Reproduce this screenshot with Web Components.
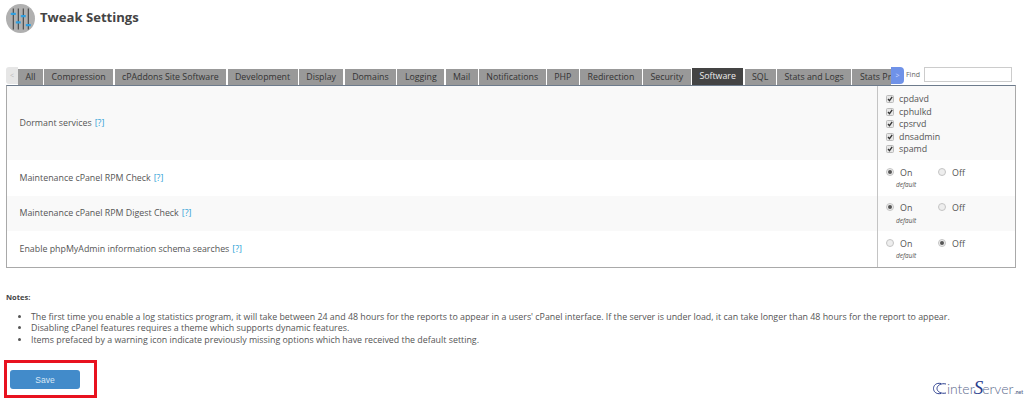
<!DOCTYPE html>
<html>
<head>
<meta charset="utf-8">
<title>Tweak Settings</title>
<style>
html, body { margin: 0; padding: 0; background: #fff; }
body { font-family: "Open Sans", sans-serif; color: #555; width: 1024px; height: 400px; overflow: hidden; }
</style>
</head>
<body>
<tweak-header>Tweak Settings</tweak-header>
<tweak-tabs active="Software"></tweak-tabs>
<tweak-table>
  <tweak-row label="Dormant services" tall>
    <tweak-check>cpdavd</tweak-check>
    <tweak-check>cphulkd</tweak-check>
    <tweak-check>cpsrvd</tweak-check>
    <tweak-check>dnsadmin</tweak-check>
    <tweak-check>spamd</tweak-check>
  </tweak-row>
  <tweak-row label="Maintenance cPanel RPM Check"><tweak-onoff value="on"></tweak-onoff></tweak-row>
  <tweak-row label="Maintenance cPanel RPM Digest Check" shaded><tweak-onoff value="on"></tweak-onoff></tweak-row>
  <tweak-row label="Enable phpMyAdmin information schema searches"><tweak-onoff value="off"></tweak-onoff></tweak-row>
</tweak-table>
<tweak-notes>
  <li>The first time you enable a log statistics program, it will take between 24 and 48 hours for the reports to appear in a users' cPanel interface. If the server is under load, it can take longer than 48 hours for the report to appear.</li>
  <li>Disabling cPanel features requires a theme which supports dynamic features.</li>
  <li>Items prefaced by a warning icon indicate previously missing options which have received the default setting.</li>
</tweak-notes>
<tweak-footer></tweak-footer>

<script>
class TweakHeader extends HTMLElement {
    constructor () {
        super();
        this.attachShadow({mode: 'open'}).innerHTML = `
        <style>
            :host { display: flex; align-items: center; gap: 5px; height: 36px; padding-left: 6px; }
            svg { width: 29px; height: 29px; display: block; }
            h1 { margin: 0; font-size: 13.1px; font-weight: 700; color: #444; position: relative; top: -1px; }
        </style>
        <svg viewBox="0 0 29 29">
            <circle cx="14.500" cy="14.500" r="14.500" fill="#b0b0b0"/>
            <path d="M7.300 4.500v21M12.300 4.500v21M17.300 4.500v21M22.300 4.500v21" stroke="#444" stroke-width="1.100"/>
            <g fill="#2f9fe0">
                <rect x="4.800" y="8.700" width="5" height="2.200" rx=".5"/>
                <rect x="9.800" y="17.300" width="5" height="2.200" rx=".5"/>
                <rect x="14.800" y="11" width="5" height="2.200" rx=".5"/>
                <rect x="19.800" y="20" width="5" height="2.200" rx=".5"/>
            </g>
        </svg>
        <h1><slot></slot></h1>`;
    }
}

class TweakTabs extends HTMLElement {
    constructor () {
        super();
        const names = ['All', 'Compression', 'cPAddons Site Software', 'Development', 'Display', 'Domains',
            'Logging', 'Mail', 'Notifications', 'PHP', 'Redirection', 'Security', 'Software', 'SQL',
            'Stats and Logs', 'Stats Pr'];
        const active = this.getAttribute('active');
        const tabs = names.map(n => `<a class="${n === active ? 'on' : ''}">${n}</a>`).join('');
        this.attachShadow({mode: 'open'}).innerHTML = `
        <style>
            :host { display: flex; align-items: flex-end; height: 18px; margin: 31px 0 0 6px; width: 1006px; font-size: 8.8px; }
            .prev, .next { width: 12px; height: 17px; flex: none; font-size: 7px; line-height: 17px; text-align: center; margin-bottom: 1px; }
            .prev { background: #e6e6e6; color: #bbb; border-radius: 3px 0 0 3px; }
            .next { background: #6f92e8; color: #cfdcff; border-radius: 0 4px 4px 0; width: 13px; }
            .strip { display: flex; gap: 1.4px; width: 873px; overflow: hidden; height: 17px; align-items: flex-end; flex: none; }
            a { flex: none; background: #999; color: #333; padding: 0 7.4px; line-height: 16px; white-space: nowrap; }
            a:last-child { padding-right: 0; flex: 1; }
            a.on { background: #444; color: #eee; line-height: 17px; }
            label { font-size: 7px; color: #666; margin: 0 4px 3px 2px; line-height: 15px; }
            input { width: 88px; height: 15px; box-sizing: border-box; border: 1px solid #ccc; padding: 0; margin: 0 0 3px; background: #fff; }
        </style>
        <div class="prev">&lt;</div>
        <div class="strip">${tabs}</div>
        <div class="next">&gt;</div>
        <label>Find</label>
        <input type="text">`;
    }
}

class TweakTable extends HTMLElement {
    constructor () {
        super();
        this.attachShadow({mode: 'open'}).innerHTML = `
        <style>
            :host { display: block; margin-left: 6px; width: 1010px; box-sizing: border-box; border: 1px solid #a9a9a9; border-top-color: #6d7b8c; }
        </style>
        <slot></slot>`;
    }
}

class TweakRow extends HTMLElement {
    constructor () {
        super();
        const tall = this.hasAttribute('tall');
        const shaded = tall || this.hasAttribute('shaded');
        this.attachShadow({mode: 'open'}).innerHTML = `
        <style>
            :host { display: grid; grid-template-columns: 870px 1fr; height: ${tall ? 74 : 35.5}px; background: ${shaded ? '#f9f9f9' : '#fff'}; font-size: 8.85px; }
            .label { display: flex; align-items: center; padding-left: 12.5px; color: #555; }
            .label a { color: #2a9fd6; margin-left: 3px; }
            .value { border-left: 1px solid #c4c4c4; padding: ${tall ? '7px' : '6px'} 0 0 8px; }
        </style>
        <div class="label"><span>${this.getAttribute('label')}</span><a>[?]</a></div>
        <div class="value"><slot></slot></div>`;
    }
}

const box = `<svg viewBox="0 0 8 8" width="8" height="8">
    <rect x=".5" y=".5" width="7" height="7" rx="1" fill="#e8e8e8" stroke="#bbb"/>
    <path d="M2 4l1.500 1.700L6.200 1.800" fill="none" stroke="#333" stroke-width="1.300"/>
</svg>`;

class TweakCheck extends HTMLElement {
    constructor () {
        super();
        this.attachShadow({mode: 'open'}).innerHTML = `
        <style>
            :host { display: flex; align-items: center; gap: 5px; height: 12.5px; font-size: 8.85px; color: #555; }
            svg { display: block; }
        </style>
        ${box}<slot></slot>`;
    }
}

function radio (on) {
    return `<svg viewBox="0 0 8 8" width="8" height="8">
        <circle cx="4" cy="4" r="3.500" fill="#eee" stroke="#c4c4c4"/>
        ${on ? '<circle cx="4" cy="4" r="2" fill="#555"/>' : ''}
    </svg>`;
}

class TweakOnoff extends HTMLElement {
    constructor () {
        super();
        const on = this.getAttribute('value') === 'on';
        this.attachShadow({mode: 'open'}).innerHTML = `
        <style>
            :host { display: block; font-size: 8.85px; color: #555; }
            .line { display: grid; grid-template-columns: 52px 40px; height: 13px; align-items: center; }
            .opt { display: flex; align-items: center; gap: 6px; }
            svg { display: block; position: relative; top: -1px; }
            .default { font-size: 6.5px; font-style: italic; margin: 1px 0 0 10px; color: #555; }
        </style>
        <div class="line">
            <div class="opt">${radio(on)}<span>On</span></div>
            <div class="opt">${radio(!on)}<span>Off</span></div>
        </div>
        <div class="default">default</div>`;
    }
}

class TweakNotes extends HTMLElement {
    constructor () {
        super();
        this.attachShadow({mode: 'open'}).innerHTML = `
        <style>
            :host { display: block; margin: 24px 0 0 6px; font-size: 8.85px; color: #555; }
            .title { font-size: 7.5px; font-weight: 700; color: #444; line-height: 10px; }
            .list { display: block; margin-top: 10px; padding-left: 25px; line-height: 11.6px; }
        </style>
        <div class="title">Notes:</div>
        <ul class="list"><slot></slot></ul>`;
    }
}

class TweakFooter extends HTMLElement {
    constructor () {
        super();
        this.attachShadow({mode: 'open'}).innerHTML = `
        <style>
            :host { display: flex; justify-content: space-between; align-items: flex-end; margin: 14px 1px 0 4px; }
            .mark { box-sizing: border-box; width: 93px; height: 38px; border: 3px solid #e8121f; padding: 7px 0 0 3px; }
            button { display: block; width: 70px; height: 19px; padding: 0; border: 0; border-radius: 3px; background: #428bca; color: #d8e8f6; font: 8.5px "Liberation Sans", sans-serif; }
            .logo { display: flex; align-items: baseline; color: #5d6b8e; font: 300 14px/18px Lato, sans-serif; }
            .logo svg { display: block; align-self: center; margin-right: 1px; }
            .logo b { font: italic 400 19px/18px "Liberation Serif", serif; color: #2c3f8f; margin: 0 -1px; }
            .logo small { font: 700 5px Lato, sans-serif; margin-left: 1px; }
        </style>
        <div class="mark"><button>Save</button></div>
        <div class="logo">
            <svg width="13" height="13" viewBox="0 0 13 13" fill="none" stroke="#2c3f8f">
                <path d="M8 1.500C3 .5.500 3.500.500 6.500S3 12.500 8 11.500"/>
                <path d="M13 2C8 .8 4 3.500 4 6.500S8 12.200 13 11"/>
            </svg>
            <span>inter</span><b>S</b><span>erver</span><small>.net</small>
        </div>`;
    }
}

customElements.define('tweak-header', TweakHeader);
customElements.define('tweak-tabs', TweakTabs);
customElements.define('tweak-table', TweakTable);
customElements.define('tweak-row', TweakRow);
customElements.define('tweak-check', TweakCheck);
customElements.define('tweak-onoff', TweakOnoff);
customElements.define('tweak-notes', TweakNotes);
customElements.define('tweak-footer', TweakFooter);
</script>
</body>
</html>
